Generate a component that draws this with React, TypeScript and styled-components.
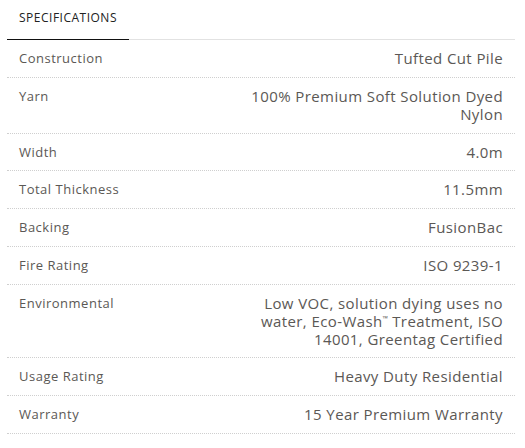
import React from "react";
import styled, { createGlobalStyle } from "styled-components";

const Global = createGlobalStyle`
  html, body { margin: 0; padding: 0; background: #fff; }
  body { font-family: "Open Sans", "Liberation Sans", sans-serif; -webkit-font-smoothing: antialiased; }
`;

const Wrap = styled.div`
  width: 508px;
  margin: 0 0 0 7px;
`;

const TabBar = styled.div`
  display: flex;
  border-bottom: 1px solid #e2e2e2;
`;

const Tab = styled.div<{ $active?: boolean }>`
  width: 122px;
  box-sizing: border-box;
  padding: 9px 12px 12px;
  font-size: 12px;
  line-height: 18px;
  letter-spacing: 0.5px;
  color: #222;
  text-transform: uppercase;
  margin-bottom: -1px;
  border-bottom: 1px solid ${(p) => (p.$active ? "#111" : "transparent")};
`;

const Table = styled.div`
  display: flex;
  flex-direction: column;
`;

const Row = styled.div`
  display: grid;
  grid-template-columns: auto 1fr;
  column-gap: 24px;
  padding: 9px 12px 9.75px;
  border-bottom: 1px dotted #cfcfcf;
`;

const Label = styled.div`
  font-size: 13px;
  line-height: 18px;
  color: #5b5855;
  letter-spacing: 0.5px;
`;

const Value = styled.div`
  font-size: 15px;
  line-height: 18px;
  color: #5b5855;
  text-align: right;
  letter-spacing: 0.4px;
  justify-self: end;
  max-width: 262px;
`;

const Tm = styled.span`
  font-size: 7px;
  line-height: 0;
  vertical-align: 6px;
  letter-spacing: 0;
`;

const rows: [string, React.ReactNode][] = [
  ["Construction", "Tufted Cut Pile"],
  ["Yarn", "100% Premium Soft Solution Dyed Nylon"],
  ["Width", "4.0m"],
  ["Total Thickness", "11.5mm"],
  ["Backing", "FusionBac"],
  ["Fire Rating", "ISO 9239-1"],
  [
    "Environmental",
    <>
      Low VOC, solution dying uses no water, Eco-Wash<Tm>™</Tm> Treatment, ISO 14001, Greentag Certified
    </>,
  ],
  ["Usage Rating", "Heavy Duty Residential"],
  ["Warranty", "15 Year Premium Warranty"],
];

export default function App() {
  return (
    <Wrap>
      <Global />
      <TabBar>
        <Tab $active>Specifications</Tab>
      </TabBar>
      <Table>
        {rows.map(([l, v]) => (
          <Row key={l}>
            <Label>{l}</Label>
            <Value>{v}</Value>
          </Row>
        ))}
      </Table>
    </Wrap>
  );
}
